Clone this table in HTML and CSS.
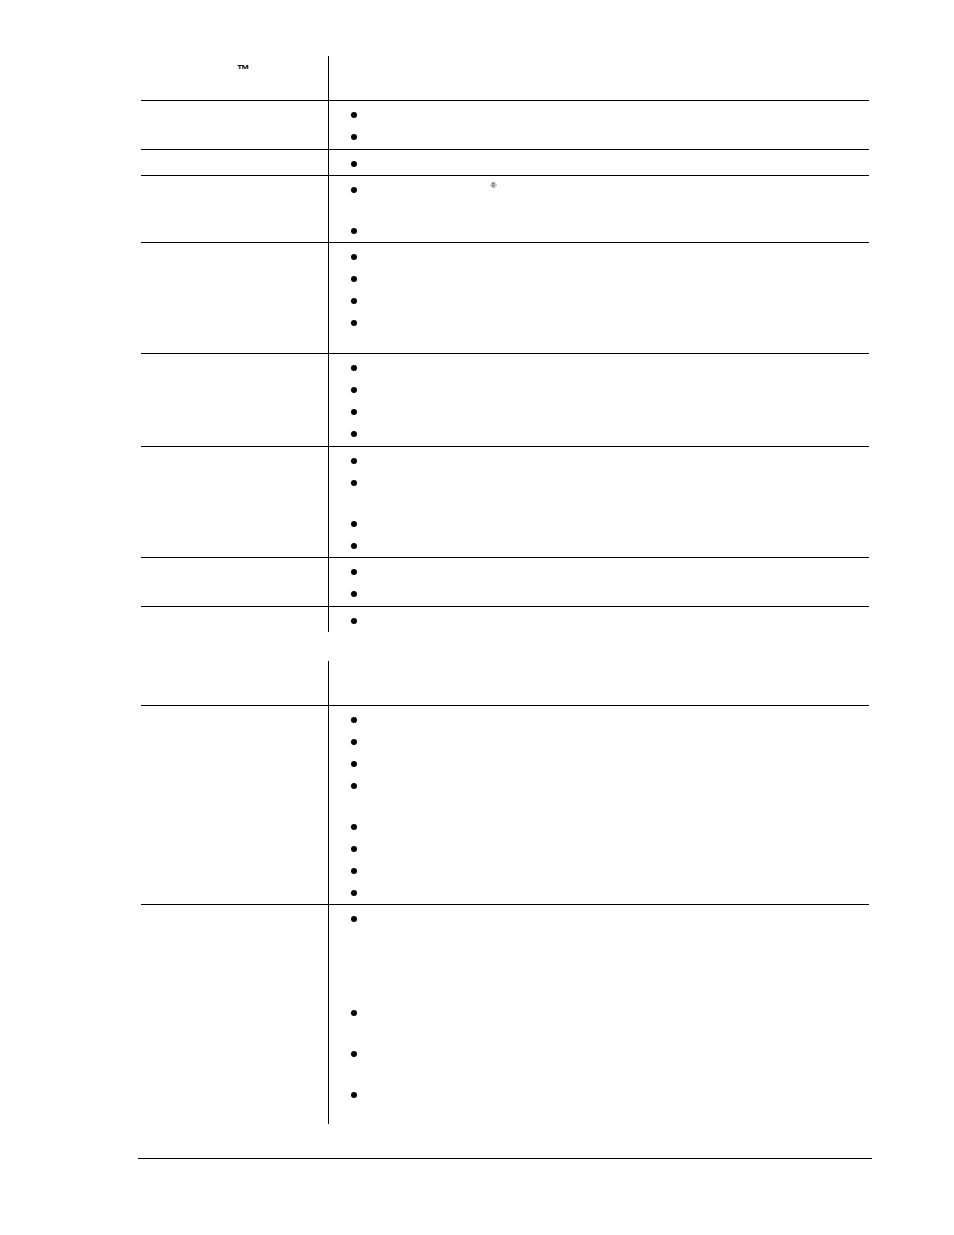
FILE: index.html
```html
<!DOCTYPE html>
<html>
<head>
<meta charset="utf-8">
<link rel="stylesheet" href="styles.css">
</head>
<body>
<div class="page">
  <div class="tbl">
    <div class="row head">
      <div class="c1"><span class="tm">™</span></div>
      <div class="c2"></div>
    </div>
    <div class="row loose">
      <div class="c1"></div>
      <ul class="c2"><li></li><li></li></ul>
    </div>
    <div class="row">
      <div class="c1"></div>
      <ul class="c2"><li></li></ul>
    </div>
    <div class="row">
      <div class="c1"></div>
      <ul class="c2"><li class="l2"><span class="reg">®</span></li><li></li></ul>
    </div>
    <div class="row">
      <div class="c1"></div>
      <ul class="c2"><li></li><li></li><li></li><li class="l2"></li></ul>
    </div>
    <div class="row loose">
      <div class="c1"></div>
      <ul class="c2"><li></li><li></li><li></li><li></li></ul>
    </div>
    <div class="row">
      <div class="c1"></div>
      <ul class="c2"><li></li><li class="l2"></li><li></li><li></li></ul>
    </div>
    <div class="row loose">
      <div class="c1"></div>
      <ul class="c2"><li></li><li></li></ul>
    </div>
    <div class="row">
      <div class="c1"></div>
      <ul class="c2"><li></li></ul>
    </div>
  </div>

  <div class="tbl second">
    <div class="row head">
      <div class="c1"></div>
      <div class="c2"></div>
    </div>
    <div class="row">
      <div class="c1"></div>
      <ul class="c2"><li></li><li></li><li></li><li class="l2"></li><li></li><li></li><li></li><li></li></ul>
    </div>
    <div class="row last">
      <div class="c1"></div>
      <ul class="c2"><li class="l5"></li><li class="l2"></li><li class="l2"></li><li class="l2"></li></ul>
    </div>
  </div>

  <div class="foot"></div>
</div>
</body>
</html>
```

FILE: styles.css
```css
html, body {
  margin: 0;
  padding: 0;
  background: #fff;
}

body {
  font-family: "Liberation Sans", Arial, sans-serif;
  color: #000;
}

.page {
  width: 954px;
  padding-top: 56px;
}

.tbl {
  margin-left: 141px;
  width: 728px;
}

.tbl.second {
  margin-top: 29px;
}

.row {
  display: grid;
  grid-template-columns: 187px 541px;
  border-top: 1px solid #000;
}

.row.head {
  border-top: none;
  height: 44px;
}

.c1 {
  margin: 0;
}

.c2 {
  margin: 0;
  border-left: 1px solid #000;
  list-style: none;
  padding: 2px 0 1px 0;
}

.row.head .c2 {
  padding: 0;
}

.row.loose .c2 {
  padding-bottom: 2px;
}

.row.last .c2 {
  padding-bottom: 0;
}

.c2 li {
  display: flex;
  align-items: flex-start;
  height: 22px;
}

.c2 li::before {
  content: "";
  display: block;
  flex: none;
  width: 6px;
  height: 6px;
  border-radius: 50%;
  background: #000;
  margin: 8.5px 0 0 21.5px;
}

.c2 li.l2 {
  height: 41px;
}

.c2 li.l5 {
  height: 94px;
}

.tm {
  display: inline-block;
  margin: 6px 0 0 96px;
  font-size: 13px;
  line-height: 16px;
  font-weight: bold;
}

.reg {
  display: inline-block;
  margin: 3px 0 0 134px;
  font-size: 8px;
  line-height: 9px;
}

.foot {
  margin: 34px 0 0 138px;
  width: 734px;
  border-top: 1px solid #000;
}
```
